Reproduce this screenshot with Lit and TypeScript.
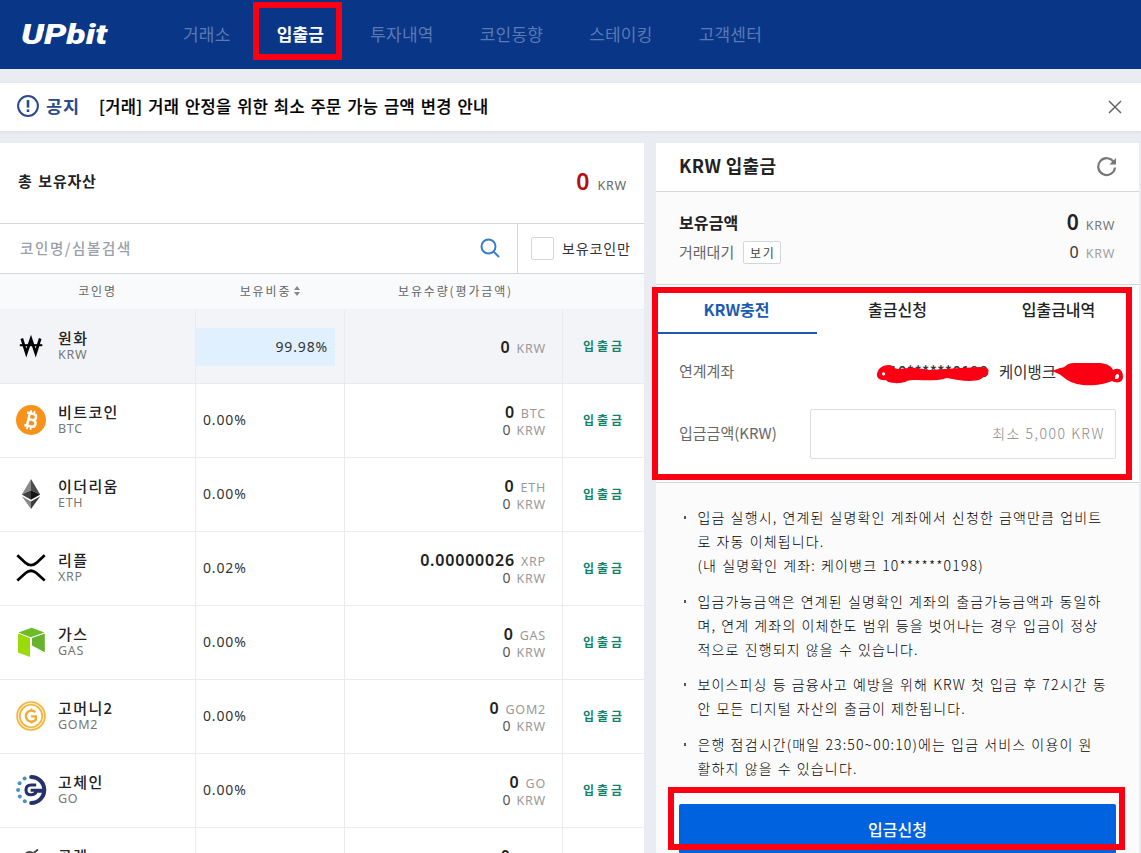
import { LitElement, html, svg, css, nothing } from "lit";
import { customElement, state } from "lit/decorators.js";

interface Coin {
  name: string;
  code: string;
  share: string;
  amount: string;
}

const COINS: Coin[] = [
  { name: "원화", code: "KRW", share: "99.98%", amount: "0" },
  { name: "비트코인", code: "BTC", share: "0.00%", amount: "0" },
  { name: "이더리움", code: "ETH", share: "0.00%", amount: "0" },
  { name: "리플", code: "XRP", share: "0.02%", amount: "0.00000026" },
  { name: "가스", code: "GAS", share: "0.00%", amount: "0" },
  { name: "고머니2", code: "GOM2", share: "0.00%", amount: "0" },
  { name: "고체인", code: "GO", share: "0.00%", amount: "0" },
  { name: "골렘", code: "GLM", share: "0.00%", amount: "0" },
];

const NOTES: string[][] = [
  [
    "입금 실행시, 연계된 실명확인 계좌에서 신청한 금액만큼 업비트",
    "로 자동 이체됩니다.",
    "(내 실명확인 계좌: 케이뱅크 10******0198)",
  ],
  [
    "입금가능금액은 연계된 실명확인 계좌의 출금가능금액과 동일하",
    "며, 연계 계좌의 이체한도 범위 등을 벗어나는 경우 입금이 정상",
    "적으로 진행되지 않을 수 있습니다.",
  ],
  [
    "보이스피싱 등 금융사고 예방을 위해 KRW 첫 입금 후 72시간 동",
    "안 모든 디지털 자산의 출금이 제한됩니다.",
  ],
  [
    "은행 점검시간(매일 23:50~00:10)에는 입금 서비스 이용이 원",
    "활하지 않을 수 있습니다.",
  ],
];

const ICONS: Record<string, unknown> = {
  KRW: svg`<g fill="none" stroke="#000" stroke-width="2.7">
    <path d="M5.8 7.5 10.3 22 15 8 19.7 22 24.2 7.5"/>
    <path d="M3.8 14.2H26.3" stroke-width="2"/></g>`,
  BTC: svg`<circle cx="15" cy="15" r="15" fill="#f7931a"/>
    <g transform="rotate(13 15 15)" fill="none" stroke="#fff" stroke-width="2.5">
      <path d="M9.6 8.6H16.2C20.4 8.6 20.4 14.6 16.2 14.6H12.2M16.4 14.6C21.5 14.6 21.5 21.4 16.4 21.4H9.6M12.3 8.6V21.4"/>
      <path d="M13 5.3V8.6M16.6 5.3V8.6M13 21.4V24.8M16.6 21.4V24.8" stroke-width="1.8"/></g>`,
  ETH: svg`<path d="M15 0 5.8 15.4 15 11.2Z" fill="#8a8a8a"/>
    <path d="M15 0 24.2 15.4 15 11.2Z" fill="#4c4c4c"/>
    <path d="M5.8 15.4 15 11.2V20.8Z" fill="#3f3f3f"/>
    <path d="M24.2 15.4 15 11.2V20.8Z" fill="#151515"/>
    <path d="M5.8 17.2 15 22.6V30Z" fill="#8a8a8a"/>
    <path d="M24.2 17.2 15 22.6V30Z" fill="#3c3c3c"/>`,
  XRP: svg`<g fill="none" stroke="#000" stroke-width="2.7">
    <path d="M1.3 2.3 9.6 9.9Q15 14.4 20.4 9.9L28.7 2.3"/>
    <path d="M1.3 27.6 9.6 20Q15 15.5 20.4 20L28.7 27.6"/></g>`,
  GAS: svg`<path d="M2.3 5.6 15.6.8 28.5 5.4 14.6 10.2Z" fill="#6cbc24"/>
    <path d="M2 6.6 14 11V30L2 25.6Z" fill="#9bdb0a"/>
    <path d="M28.8 6.4V25.2L16 18.6V11Z" fill="#66b32e"/>`,
  GOM2: svg`<circle cx="15" cy="15" r="14.8" fill="#f3b33d"/>
    <circle cx="15" cy="15" r="12.6" fill="none" stroke="#fff0cb" stroke-width="1.1"/>
    <circle cx="15" cy="15" r="10.4" fill="#fff"/>
    <path d="M19.4 11.2A5.6 5.6 0 1 0 19.8 18.8V15.4H15" fill="none" stroke="#edac36" stroke-width="2.4"/>
    <path d="M15.4 7.4V10M15.4 20V22.6" stroke="#edac36" stroke-width="1.8"/>`,
  GO: svg`<path d="M15.2 1.9A13 13 0 0 1 15.2 28" fill="none" stroke="#26316c" stroke-width="4" stroke-linecap="round"/>
    <path d="M20.2 10H15Q10 10 10 15T15 19.8Q19.4 19.8 20.4 16.2H27M14.6 15.2H27" fill="none" stroke="#26316c" stroke-width="3.1"/>
    <g fill="#4692bc"><circle cx="8.6" cy="3.6" r="2"/><circle cx="3.6" cy="8.3" r="2"/><circle cx="2.1" cy="15" r="2"/><circle cx="3.8" cy="21.6" r="2"/><circle cx="8.8" cy="26.3" r="2"/></g>`,
  GLM: svg`<g fill="none" stroke="#444" stroke-width="1.8">
    <circle cx="13.5" cy="8" r="5"/><path d="M17.5 4 22 .5M13.5 13V20"/><circle cx="13.5" cy="24" r="4"/></g>`,
};

@customElement("coin-row")
class CoinRow extends LitElement {
  static properties = { coin: { attribute: false } };
  declare coin: Coin;

  static styles = css`
    :host {
      display: grid;
      grid-template-columns: 196px 149px 218px 81px;
      height: 73px;
      border-bottom: 1px solid #eaebee;
      font-family: "Noto Sans", "Noto Sans CJK KR", sans-serif;
      white-space: nowrap;
    }
    :host(.selected) { background: #f2f4f8; }
    .cell { display: flex; align-items: center; border-right: 1px solid #eaebee; min-width: 0; box-sizing: border-box; height: 73px; }
    .cell:last-child { border-right: 0; }
    .coin { gap: 12px; padding: 0 0 1px 16px; }
    .icon { width: 30px; height: 30px; display: block; overflow: visible; flex: none; }
    .names { display: flex; flex-direction: column; }
    .name { font: 500 15px/16px "Noto Sans CJK KR", sans-serif; color: #222; letter-spacing: 1.4px; }
    .code { font-size: 12.5px; line-height: 17px; color: #777; letter-spacing: .7px; }
    .share { font-size: 14px; color: #333; letter-spacing: .85px; padding-bottom: 2px; }
    .plain { padding-left: 7px; }
    .bar { box-sizing: border-box; height: 38px; margin-top: 2px; background: #e1f0ff; display: flex; align-items: center; justify-content: flex-end; padding: 0 7px 1px 0; }
    .amounts { flex-direction: column; justify-content: center; align-items: flex-end; padding: 1px 16px 0 0; }
    .line { display: flex; align-items: baseline; gap: 6px; line-height: 18px; height: 18px; }
    .value { font-size: 16px; font-weight: 600; color: #222; letter-spacing: .8px; }
    .unit { font-size: 12.5px; color: #999; letter-spacing: .8px; }
    .zero { font-size: 14px; color: #555; }
    .action { justify-content: center; font: 700 12px/18px "Noto Sans CJK KR", sans-serif; color: #12826c; letter-spacing: 3px; padding: 0 0 1px 1px; }
  `;

  render() {
    const c = this.coin;
    const krw = c.code === "KRW";
    return html`
      <div class="cell coin">
        <svg class="icon" viewBox="0 0 30 30">${ICONS[c.code]}</svg>
        <div class="names"><span class="name">${c.name}</span><span class="code">${c.code}</span></div>
      </div>
      <div class="cell share">
        ${krw
          ? html`<div class="bar" style="width:${(parseFloat(c.share) * 1.39).toFixed(0)}px">${c.share}</div>`
          : html`<span class="plain">${c.share}</span>`}
      </div>
      <div class="cell amounts">
        <div class="line"><span class="value">${c.amount}</span><span class="unit">${c.code}</span></div>
        ${krw ? nothing : html`<div class="line"><span class="zero">0</span><span class="unit">KRW</span></div>`}
      </div>
      <div class="cell action">입출금</div>
    `;
  }
}

@customElement("app-root")
class AppRoot extends LitElement {
  @state() tab = 0;

  static styles = css`
    :host {
      display: block;
      position: relative;
      height: 100vh;
      overflow: hidden;
      background: #e9ecf1;
      font-family: "Noto Sans CJK KR", sans-serif;
      color: #222;
      white-space: nowrap;
    }
    .latin { font-family: "Noto Sans", sans-serif; }
    .top { height: 69px; background: #093687; display: flex; align-items: center; }
    .logo { width: 92px; height: 30px; margin-left: 20px; flex: none; }
    .logo text { font: italic 900 27px Roboto, sans-serif; fill: #fff; }
    .nav { display: flex; margin-left: 71px; padding-bottom: 2px; gap: 46.1px; font-size: 17px; line-height: 24px; color: #5b79b3; letter-spacing: .2px; }
    .nav .on { color: #fff; font-weight: 700; }
    .notice { height: 48px; margin-top: 14px; background: #fff; display: flex; align-items: center; padding: 0 19px 0 17px; box-shadow: 0 1px 3px #d9dce4; }
    .notice svg { margin-bottom: 2px; }
    .notice svg:last-child { margin-bottom: 0; }
    .notice .tag { margin-left: 7px; padding-bottom: 3px; width: 53px; color: #2b4a8b; font-size: 17.5px; font-weight: 700; letter-spacing: .8px; }
    .notice .msg { color: #000; padding-bottom: 2px; font-size: 16.5px; font-weight: 500; flex: 1; letter-spacing: .35px; word-spacing: 1.6px; -webkit-text-stroke: .2px #000; }
    .body { display: flex; gap: 12px; margin-top: 12px; }
    .left { width: 644px; height: 710px; background: #fff; overflow: hidden; flex: none; }
    .total { height: 80px; border-bottom: 1px solid #d4d6dc; display: flex; align-items: center; justify-content: space-between; padding: 0 17px 0 18px; }
    .total .label { font-size: 15px; font-weight: 700; padding-bottom: 6px; letter-spacing: .8px; word-spacing: 1.5px; }
    .sum { display: flex; align-items: baseline; gap: 8px; padding-bottom: 4px; }
    .sum b { font-size: 23px; line-height: 30px; color: #b5100f; font-weight: 600; }
    .sum span { font-size: 12.5px; color: #666; letter-spacing: .8px; }
    .search { height: 49px; border-bottom: 1px solid #d4d6dc; display: flex; }
    .field { width: 518px; box-sizing: border-box; border-right: 1px solid #d4d6dc; display: flex; align-items: center; justify-content: space-between; padding: 0 17px 2px 20px; font-size: 14.5px; font-weight: 500; color: #9a9fa9; letter-spacing: 1.6px; }
    .only { display: flex; align-items: center; padding-left: 13px; font-size: 14px; color: #333; letter-spacing: .9px; padding-bottom: 1px; }
    .check { width: 21px; height: 21px; border: 1px solid #d4d6dc; border-radius: 2px; margin-right: 8px; }
    .heads { display: grid; grid-template-columns: 195px 150px 221px 78px; height: 36px; box-sizing: border-box; padding-bottom: 2px; align-items: center; text-align: center; background: #f9fafc; border-bottom: 1px solid #eef0f3; font-size: 12px; color: #666; letter-spacing: 1.85px; }
    .heads svg { margin-left: 3px; }
    .right { width: 483px; height: 710px; background: #fbfbfc; display: flex; flex-direction: column; flex: none; }
    .right > * { flex: none; }
    .title { height: 48px; background: #fff; border-bottom: 1px solid #d4d6dc; display: flex; justify-content: space-between; align-items: center; padding: 0 21px 0 23px; font-size: 18px; font-weight: 700; letter-spacing: .35px; }
    .title span { padding-bottom: 4px; }
    .balance { height: 92px; box-sizing: border-box; padding: 15px 24px 0 23px; }
    .bal { display: flex; align-items: center; height: 30px; }
    .bal .strong { font-size: 16px; font-weight: 700; letter-spacing: .1px; }
    .bal .soft { font-size: 15px; color: #666; padding-bottom: 1px; }
    .view { border: 1px solid #d4d6dc; border-radius: 2px; width: 36px; height: 21px; margin: 1px 0 0 9px; background: #fff; text-align: center; font-size: 12px; line-height: 22px; letter-spacing: 1.6px; color: #444; text-indent: 1px; }
    .amount { margin-left: auto; display: flex; align-items: baseline; gap: 7px; padding-bottom: 1px; }
    .amount .big { font-size: 21px; line-height: 30px; font-weight: 600; }
    .amount .small { font-size: 16px; line-height: 30px; color: #333; }
    .amount .cur { font-size: 12.5px; color: #777; letter-spacing: .7px; }
    .amount .pale { color: #a0a0a0; }
    .form { background: #fff; border-top: 1px solid #d4d6dc; border-bottom: 1px solid #d4d6dc; height: 197px; }
    .tabs { display: flex; height: 49px; }
    .tabs div { width: 161px; box-sizing: border-box; text-align: center; font-size: 16px; font-weight: 500; line-height: 49px; border-bottom: 2px solid transparent; }
    .tabs .on { color: #1c5bb0; font-weight: 700; border-color: #1c5bb0; }
    .account { height: 75px; box-sizing: border-box; display: flex; align-items: center; padding: 0 23px 2px; font-size: 15px; color: #333; }
    .account .key, .deposit .key { color: #666; font-size: 15px; margin-right: auto; }
    .account .num { width: 110px; letter-spacing: .35px; font-weight: 500; }
    .account .bank { width: 117px; font-size: 15.5px; }
    .deposit { display: flex; align-items: center; padding: 0 23px; }
    .deposit .key { padding-bottom: 3px; }
    .input { width: 304px; height: 48px; border: 1px solid #dcdee2; border-radius: 2px; box-sizing: content-box; text-align: right; font-size: 14px; font-weight: 300; line-height: 47px; color: #888; }
    .input span { padding-right: 10px; letter-spacing: 1.5px; }
    .notes { list-style: none; margin: 0; padding: 22px 0 0 28px; display: flex; flex-direction: column; gap: 11.7px; height: 298px; box-sizing: border-box; font-size: 14px; font-weight: 300; line-height: 24px; color: #000; letter-spacing: 1.15px; word-spacing: .8px; }
    .notes li { display: flex; }
    .notes li::before { content: ""; width: 2px; height: 3px; background: #555; margin: 11px 11.5px 0 0; flex: none; }
    .notes p { margin: 0; }
    .submit { margin: 23px 23px 0; height: 52px; border-radius: 2px; background: #0062df; color: #fff; text-align: center; font-size: 16px; font-weight: 500; line-height: 51px; }
    .marks { position: absolute; inset: 0; width: 1141px; height: 853px; pointer-events: none; }
  `;

  render() {
    const nav = ["거래소", "입출금", "투자내역", "코인동향", "스테이킹", "고객센터"];
    const tabs = ["KRW충전", "출금신청", "입출금내역"];
    return html`
      <header class="top">
        <svg class="logo" viewBox="0 0 92 30">
          <text x="1" y="23.5" textLength="86" lengthAdjust="spacingAndGlyphs">UPbit</text>
          <path d="M17 10 23 4.5 24 11" fill="#fff"/>
        </svg>
        <nav class="nav">${nav.map((n, i) => html`<span class=${i === 1 ? "on" : ""}>${n}</span>`)}</nav>
      </header>
      <section class="notice">
        <svg width="22" height="22" viewBox="0 0 22 22" fill="none" stroke="#2b4a8b">
          <circle cx="11" cy="11" r="9.9" stroke-width="2"/><path d="M11 5V12.6" stroke-width="2.6"/><path d="M11 14.4V17" stroke-width="2.6"/>
        </svg>
        <span class="tag">공지</span>
        <span class="msg">[거래] 거래 안정을 위한 최소 주문 가능 금액 변경 안내</span>
        <svg width="14" height="14" viewBox="0 0 14 14" stroke="#666" stroke-width="1.5"><path d="M1 1 13 13M13 1 1 13"/></svg>
      </section>
      <main class="body">
        <section class="left">
          <div class="total">
            <span class="label">총 보유자산</span>
            <div class="sum latin"><b>0</b><span>KRW</span></div>
          </div>
          <div class="search">
            <div class="field">
              <span>코인명/심볼검색</span>
              <svg width="20" height="20" viewBox="0 0 20 20" fill="none" stroke="#3b7cd3" stroke-width="2"><circle cx="8.5" cy="8.5" r="7"/><path d="M13.6 13.6 19 19"/></svg>
            </div>
            <div class="only"><span class="check"></span>보유코인만</div>
          </div>
          <div class="heads">
            <span>코인명</span>
            <span>보유비중<svg width="6" height="10" viewBox="0 0 6 10" fill="#888"><path d="M3 0 6 4H0Z"/><path d="M3 10 6 6H0Z"/></svg></span>
            <span>보유수량(평가금액)</span>
          </div>
          ${COINS.map((c, i) => html`<coin-row class=${i === 0 ? "selected" : ""} .coin=${c}></coin-row>`)}
        </section>
        <section class="right">
          <div class="title">
            <span>KRW 입출금</span>
            <svg width="22" height="20" viewBox="0 0 22 20" fill="none" stroke="#777" stroke-width="2.2"><path d="M17.8 5.2A8.4 8.4 0 1 0 19 10.5"/><path d="M20 1V7.6H13.4Z" fill="#777" stroke="none"/></svg>
          </div>
          <div class="balance">
            <div class="bal">
              <span class="strong">보유금액</span>
              <div class="amount latin"><span class="big">0</span><span class="cur">KRW</span></div>
            </div>
            <div class="bal">
              <span class="soft">거래대기</span><span class="view">보기</span>
              <div class="amount latin"><span class="small">0</span><span class="cur pale">KRW</span></div>
            </div>
          </div>
          <div class="form">
            <div class="tabs">${tabs.map((t, i) => html`<div class=${i === this.tab ? "on" : ""} @click=${() => (this.tab = i)}>${t}</div>`)}</div>
            <div class="account"><span class="key">연계계좌</span><span class="num">10******0198</span><span class="bank">케이뱅크</span></div>
            <div class="deposit"><span class="key">입금금액(KRW)</span><div class="input"><span>최소 5,000 KRW</span></div></div>
          </div>
          <ul class="notes">${NOTES.map((n) => html`<li><div>${n.map((l) => html`<p>${l}</p>`)}</div></li>`)}</ul>
          <div class="submit">입금신청</div>
        </section>
      </main>
      <svg class="marks" viewBox="0 0 1141 853" fill="none" stroke="#fb0012" stroke-width="6">
        <rect x="256" y="5" width="83" height="52"/>
        <rect x="655" y="290" width="474" height="187"/>
        <rect x="671" y="790" width="451" height="57"/>
        <path fill="#fb0012" stroke="none" fill-rule="evenodd" d="M877 374C878 368 883 365 889 365C895 365 892 369 900 369L912 367.5L930 370L960 368L980 367C990 367 989 371 988 373C990 375 984 376 981 379C973 383 957 380 947 378C930 383 916 378 907 381C903 384 888 384 886 380C881 381 876 378 877 374ZM882 374A1.6 1.6 0 1 0 882 373.9Z"/>
        <path fill="#fb0012" stroke="none" fill-rule="evenodd" d="M1052 371L1060 368C1066 368 1066 363 1074 363H1100C1108 364 1111 366 1113 370C1119 367 1123 370 1123 377C1123 382 1118 384 1112 381C1106 384 1090 387 1077 384C1068 382 1064 377 1059 374ZM1115 379C1120 380 1120 373 1117 374C1115 375 1115 377 1115 379Z"/>
      </svg>
    `;
  }
}
